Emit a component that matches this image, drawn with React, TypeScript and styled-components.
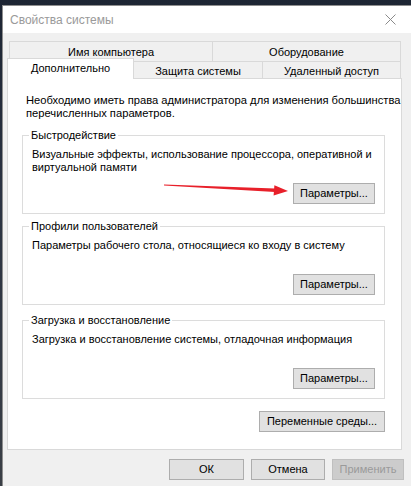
import React from "react";
import styled, { createGlobalStyle } from "styled-components";

const Global = createGlobalStyle`
  html, body { margin: 0; padding: 0; }
  body {
    width: 411px; height: 486px; overflow: hidden;
    font-family: "Liberation Sans", Arial, sans-serif;
  }
  * { box-sizing: border-box; }
`;

const Desktop = styled.div`
  width: 411px;
  height: 486px;
  display: flex;
  padding: 5px 0 0 2px;
  background: linear-gradient(180deg, #1d2533 0%, #2b3342 40%, #3a3f46 100%);
  overflow: hidden;
`;

const Window = styled.div`
  flex: 1;
  min-width: 0;
  display: flex;
  flex-direction: column;
  background: #f0f0f0;
  border-left: 1px solid #8e8e8e;
  border-top: 1px solid #8e8e8e;
`;

const TitleBar = styled.div`
  height: 27px;
  flex: none;
  background: #ffffff;
  display: flex;
  align-items: center;
  justify-content: space-between;
  padding: 0 15px 0 7px;
`;

const Title = styled.span`
  font-size: 12px;
  color: #9a9a9a;
`;

const Close = styled.svg`
  width: 11px;
  height: 11px;
  display: block;
`;

const Body = styled.div`
  flex: 1;
  display: flex;
  flex-direction: column;
  align-items: flex-start;
  padding: 8px 0 0 4px;
  font-size: 11px;
  color: #000;
  white-space: nowrap;
`;

const TabRow = styled.div<{ $inset: number; $h: number }>`
  display: flex;
  align-items: flex-end;
  height: ${(p) => p.$h}px;
  margin-left: ${(p) => p.$inset}px;
`;

const Tab = styled.div<{ $w: number; $active?: boolean; $first?: boolean }>`
  width: ${(p) => p.$w}px;
  height: ${(p) => (p.$active ? "21px" : "100%")};
  display: flex;
  align-items: center;
  justify-content: center;
  background: ${(p) => (p.$active ? "#ffffff" : "#f0f0f0")};
  border-top: 1px solid #d9d9d9;
  border-right: 1px solid #d9d9d9;
  border-left: ${(p) => (p.$first ? "1px solid #d9d9d9" : "none")};
  margin-bottom: ${(p) => (p.$active ? -1 : 0)}px;
  position: relative;
  z-index: ${(p) => (p.$active ? 2 : 1)};
  padding-top: ${(p) => (p.$active ? 0 : 1)}px;
  padding-bottom: ${(p) => (p.$active ? 3 : 0)}px;
`;

const Panel = styled.div`
  width: 395px;
  height: 372px;
  background: #ffffff;
  border: 1px solid #d9d9d9;
  display: flex;
  flex-direction: column;
  padding: 15px 16px 0 14px;
  position: relative;
`;

const Intro = styled.p`
  margin: 0 0 9px 4px;
  line-height: 13px;
  font-size: 11.2px;
`;

const Group = styled.fieldset<{ $after: number }>`
  margin: 0 0 ${(p) => p.$after}px 0;
  border: 1px solid #dcdcdc;
  padding: 6px 9px 8px 9px;
  min-width: 0;
  display: flex;
  flex-direction: column;
  height: 85px;
`;

const Legend = styled.legend`
  margin-left: -3px;
  padding: 0 2px;
  line-height: 13px;
`;

const GroupText = styled.p`
  margin: 0;
  height: 26px;
  line-height: 13px;
  padding-left: 0;
`;

const ButtonRow = styled.div<{ $top: number; $right: number }>`
  display: flex;
  justify-content: flex-end;
  gap: 7px;
  margin-top: ${(p) => p.$top}px;
  padding-right: ${(p) => p.$right}px;
`;

const Button = styled.button<{ $w: number; $disabled?: boolean }>`
  width: ${(p) => p.$w}px;
  height: 21px;
  padding: 0 0 1px 0;
  font-family: inherit;
  font-size: 11px;
  background: ${(p) => (p.$disabled ? "#cccccc" : "#e1e1e1")};
  border: 1px solid ${(p) => (p.$disabled ? "#bfbfbf" : "#adadad")};
  color: ${(p) => (p.$disabled ? "#9a9a9a" : "#000000")};
  border-radius: 0;
  white-space: nowrap;
`;

const Arrow = styled.svg`
  position: absolute;
  left: 153px;
  top: 102px;
  width: 132px;
  height: 16px;
  overflow: visible;
`;

const Footer = styled.div`
  display: flex;
  align-self: stretch;
  justify-content: flex-end;
  gap: 7px;
  padding: 9px 7px 0 0;
`;

export default function App() {
  return (
    <>
      <Global />
      <Desktop>
        <Window>
          <TitleBar>
            <Title>Свойства системы</Title>
            <Close viewBox="0 0 11 11">
              <path d="M0.5 0.5 L10.5 10.5 M10.5 0.5 L0.5 10.5" stroke="#8a8a8a" strokeWidth="1" fill="none" />
            </Close>
          </TitleBar>
          <Body>
            <TabRow $inset={2} $h={20}>
              <Tab $w={204} $first>Имя компьютера</Tab>
              <Tab $w={188}>Оборудование</Tab>
            </TabRow>
            <TabRow $inset={0} $h={17}>
              <Tab $w={127} $active $first>Дополнительно</Tab>
              <Tab $w={129}>Защита системы</Tab>
              <Tab $w={138}>Удаленный доступ</Tab>
            </TabRow>
            <Panel>
              <Intro>
                Необходимо иметь права администратора для изменения большинства
                <br />
                перечисленных параметров.
              </Intro>
              <Group $after={6}>
                <Legend>Быстродействие</Legend>
                <GroupText>
                  Визуальные эффекты, использование процессора, оперативной и
                  <br />
                  виртуальной памяти
                </GroupText>
                <ButtonRow $top={9} $right={0}>
                  <Button $w={82}>Параметры...</Button>
                </ButtonRow>
              </Group>
              <Group $after={9}>
                <Legend>Профили пользователей</Legend>
                <GroupText>Параметры рабочего стола, относящиеся ко входу в систему</GroupText>
                <ButtonRow $top={9} $right={0}>
                  <Button $w={82}>Параметры...</Button>
                </ButtonRow>
              </Group>
              <Group $after={12}>
                <Legend>Загрузка и восстановление</Legend>
                <GroupText>Загрузка и восстановление системы, отладочная информация</GroupText>
                <ButtonRow $top={9} $right={0}>
                  <Button $w={82}>Параметры...</Button>
                </ButtonRow>
              </Group>
              <ButtonRow $top={0} $right={0}>
                <Button $w={126}>Переменные среды...</Button>
              </ButtonRow>
              <Arrow viewBox="0 0 132 16">
                <polygon points="3,3.4 114,7.6 114,10.9 3,4.6" fill="#e8202a" />
                <polygon points="127,10 112.6,14.6 113.4,4.2" fill="#e8202a" />
              </Arrow>
            </Panel>
            <Footer>
              <Button $w={75}>ОК</Button>
              <Button $w={74}>Отмена</Button>
              <Button $w={72} $disabled>Применить</Button>
            </Footer>
          </Body>
        </Window>
      </Desktop>
    </>
  );
}
